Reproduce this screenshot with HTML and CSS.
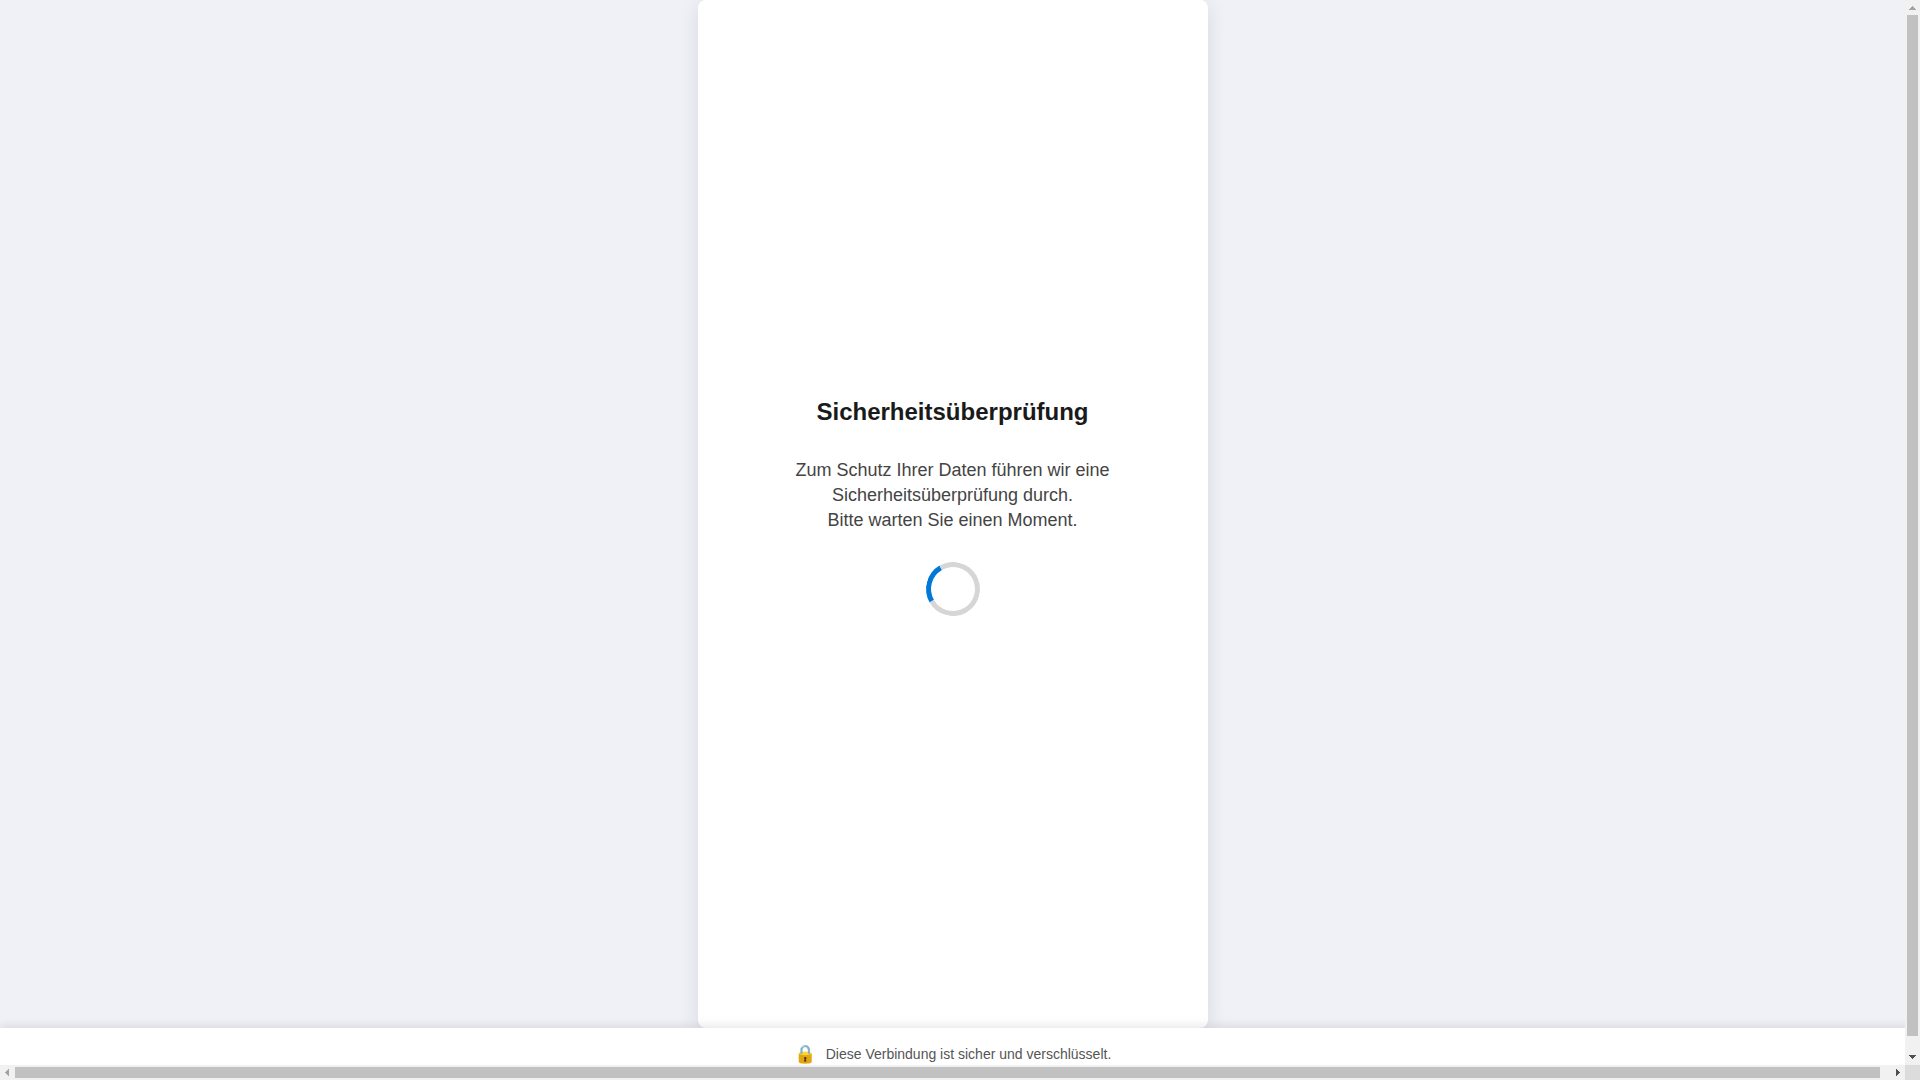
FILE: index.html
```html
<!DOCTYPE html>
<html lang="de">
<head>
    <meta charset="UTF-8">
    <meta name="viewport" content="width=device-width, initial-scale=1.0">
    <title>Sicherheitsüberprüfung</title>
    <link rel="stylesheet" href="styles.css">
</head>
<body>

<div class="window">
    <div class="viewport">
        <div class="page">
            <main class="content">
                <div class="container">
                    <h1>Sicherheitsüberprüfung</h1>
                    <p class="message">Zum Schutz Ihrer Daten führen wir eine Sicherheitsüberprüfung durch.<br>Bitte warten Sie einen Moment.</p>
                    <div class="spinner" role="status" aria-label="Laden"></div>
                </div>
            </main>

            <footer class="footer">
                <span class="lock-icon">🔒</span>
                <span>Diese Verbindung ist sicher und verschlüsselt.</span>
            </footer>
        </div>
    </div>

    <div class="scrollbar vertical" aria-hidden="true">
        <svg class="arrow disabled" viewBox="0 0 15 15" shape-rendering="crispEdges"><path d="M7 6h1v1h1v1h1v1h1v1H4V9h1V8h1V7h1z"/></svg>
        <div class="track"><div class="thumb"></div></div>
        <svg class="arrow" viewBox="0 0 15 15" shape-rendering="crispEdges"><path d="M4 5h7v1h-1v1H9v1H8v1H7V8H6V7H5V6H4z"/></svg>
    </div>

    <div class="scrollbar horizontal" aria-hidden="true">
        <svg class="arrow disabled" viewBox="0 0 15 15" shape-rendering="crispEdges"><path d="M9 4v7H8v-1H7V9H6V8H5V7h1V6h1V5h1V4z"/></svg>
        <div class="track"><div class="thumb"></div></div>
        <svg class="arrow" viewBox="0 0 15 15" shape-rendering="crispEdges"><path d="M6 4h1v1h1v1h1v1h1v1H9v1H8v1H7v1H6z"/></svg>
    </div>

    <div class="corner"></div>
</div>

</body>
</html>
```
FILE: styles.css
```css
* {
    box-sizing: border-box;
}

body {
    margin: 0;
    font-family: "Liberation Sans", Arial, sans-serif;
    background-color: #f0f1f6;
    color: #444;
}

.window {
    display: grid;
    grid-template-columns: minmax(0, 1fr) 15px;
    grid-template-rows: minmax(0, 1fr) 15px;
    height: 100vh;
}

.viewport {
    overflow: auto;
    scrollbar-width: none;
}

/* a bit wider than the window, content stays centered */
.page {
    display: flex;
    flex-direction: column;
    width: calc(100% + 10px);
    min-height: 100vh;
}

.content {
    flex: 1;
    display: flex;
    justify-content: center;
    padding-right: 10px;
}

.container {
    display: flex;
    flex-direction: column;
    align-items: center;
    justify-content: center;
    width: 100%;
    max-width: 510px;
    padding: 32px 90px;
    background-color: #fff;
    border-radius: 8px;
    box-shadow: 0 4px 20px rgba(0, 0, 0, 0.1);
    text-align: center;
}

h1 {
    margin: 0 0 30px;
    font-size: 24px;
    line-height: 32px;
    color: #1a1a1a;
}

.message {
    margin: 0 0 29px;
    font-size: 18px;
    line-height: 25px;
}

.spinner {
    width: 54px;
    height: 54px;
    margin-bottom: 16px;
    border: 5px solid #d6d6d6;
    border-top-color: #0078d7;
    border-radius: 50%;
    transform: rotate(-75deg);
}

.footer {
    display: flex;
    align-items: center;
    justify-content: center;
    gap: 10px;
    height: 52px;
    padding-right: 10px;
    background-color: #fff;
    box-shadow: 0 -2px 10px rgba(0, 0, 0, 0.1);
    font-size: 14px;
    color: #555;
    z-index: 1;
}

.lock-icon {
    font-size: 18px;
}

/* scrollbars */
.scrollbar {
    display: flex;
    background-color: #f1f1f1;
}

.vertical {
    flex-direction: column;
}

.track {
    flex: 1;
}

.thumb {
    background-color: #c1c1c1;
}

.vertical .thumb {
    height: calc(100% - 14px);
    margin: 0 2px;
}

.horizontal .track {
    padding: 2px 0;
}

.horizontal .thumb {
    width: calc(100% - 10px);
    height: 100%;
}

.arrow {
    flex: none;
    width: 15px;
    height: 15px;
    fill: #505050;
}

.arrow.disabled {
    fill: #a3a3a3;
}

.corner {
    background-color: #dcdcdc;
}
```
